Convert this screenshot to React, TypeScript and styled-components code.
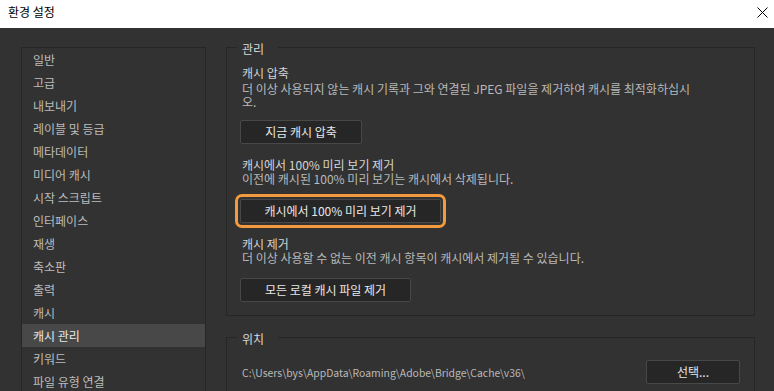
import React from 'react';
import styled, { createGlobalStyle } from 'styled-components';

const GlobalStyle = createGlobalStyle`
  html, body {
    margin: 0;
    padding: 0;
    background: #323232;
  }
  body {
    font-family: "Noto Sans CJK KR", "Noto Sans", sans-serif;
    overflow: hidden;
  }
`;

const Window = styled.div`
  width: 774px;
  height: 391px;
  display: flex;
  flex-direction: column;
  overflow: hidden;
  background: #323232;
`;

const TitleBar = styled.div`
  height: 28px;
  flex: 0 0 28px;
  background: #ffffff;
  display: flex;
  align-items: center;
  justify-content: space-between;
  padding: 0 6px 4px 8px;
  box-sizing: border-box;
`;

const TitleText = styled.span`
  font-size: 12px;
  line-height: 14px;
  color: #000000;
`;

const CloseButton = styled.button`
  border: none;
  background: none;
  padding: 0;
  width: 11px;
  height: 11px;
  display: flex;
`;

const Body = styled.div`
  flex: 1;
  display: flex;
  gap: 20px;
  padding: 10px 19px 0 21px;
  min-height: 0;
`;

const Sidebar = styled.ul`
  list-style: none;
  margin: 9px 0 0 0;
  padding: 0;
  width: 185px;
  flex: 0 0 185px;
  box-sizing: border-box;
  border: 1px solid #262626;
  border-bottom: none;
`;

const NavItem = styled.li<{ $active?: boolean }>`
  height: 23px;
  line-height: 24px;
  padding-left: 11px;
  font-size: 12px;
  color: ${p => (p.$active ? '#e8e8e8' : '#bcbcbc')};
  background: ${p => (p.$active ? '#484848' : 'transparent')};
  white-space: nowrap;
`;

const Content = styled.div`
  flex: 1;
  display: flex;
  flex-direction: column;
  gap: 12px;
  min-width: 0;
`;

const Group = styled.fieldset<{ $padTop: number; $padBottom: number }>`
  margin: 0;
  min-width: 0;
  border: 1px solid #262626;
  padding: ${p => p.$padTop}px 14px ${p => p.$padBottom}px 15px;
`;

const GroupLegend = styled.legend`
  font-size: 12px;
  line-height: 14px;
  color: #d8d8d8;
  padding: 4px 14px 0 5px;
  margin-left: -5px;
`;

const Section = styled.div<{ $gap?: number }>`
  display: flex;
  flex-direction: column;
  align-items: flex-start;
  margin-top: ${p => p.$gap ?? 0}px;
`;

const SectionTitle = styled.div`
  font-size: 12px;
  line-height: 14px;
  color: #d4d4d4;
`;

const SectionDesc = styled.div<{ $offset?: number }>`
  font-size: 12px;
  line-height: 13px;
  color: #b9b9b9;
  max-width: 452px;
  margin-top: ${p => p.$offset ?? 0}px;
`;

const Button = styled.button<{ $width: number; $top?: number; $focused?: boolean }>`
  width: ${p => p.$width}px;
  height: 24px;
  margin: ${p => p.$top ?? 0}px 0 0 -2px;
  padding: 0;
  background: #262626;
  border: 1px solid #484848;
  border-radius: 2px;
  color: #e6e6e6;
  font-family: inherit;
  font-size: 12px;
  line-height: 22px;
  outline: ${p => (p.$focused ? '3px solid #f39a3e' : 'none')};
  outline-offset: 2px;
`;

const PathRow = styled.div`
  display: flex;
  align-items: center;
  justify-content: space-between;
`;

const PathText = styled.span`
  font-size: 10.4px;
  color: #b9b9b9;
  white-space: nowrap;
`;

const navItems = [
  '일반',
  '고급',
  '내보내기',
  '레이블 및 등급',
  '메타데이터',
  '미디어 캐시',
  '시작 스크립트',
  '인터페이스',
  '재생',
  '축소판',
  '출력',
  '캐시',
  '캐시 관리',
  '키워드',
  '파일 유형 연결',
];

const App: React.FC = () => {
  return (
    <Window>
      <GlobalStyle />
      <TitleBar>
        <TitleText>환경 설정</TitleText>
        <CloseButton aria-label="닫기">
          <svg width="11" height="11" viewBox="0 0 11 11">
            <path d="M0.5 0.5 L10.5 10.5 M10.5 0.5 L0.5 10.5" stroke="#000" strokeWidth="1" fill="none" />
          </svg>
        </CloseButton>
      </TitleBar>

      <Body>
        <Sidebar>
          {navItems.map(item => (
            <NavItem key={item} $active={item === '캐시 관리'}>
              {item}
            </NavItem>
          ))}
        </Sidebar>

        <Content>
          <Group $padTop={10} $padBottom={13}>
            <GroupLegend>관리</GroupLegend>

            <Section>
              <SectionTitle>캐시 압축</SectionTitle>
              <SectionDesc $offset={2}>
                더 이상 사용되지 않는 캐시 기록과 그와 연결된 JPEG 파일을 제거하여 캐시를 최적화하십시오.
              </SectionDesc>
              <Button $width={122} $top={12}>
                지금 캐시 압축
              </Button>
            </Section>

            <Section $gap={14}>
              <SectionTitle>캐시에서 100% 미리 보기 제거</SectionTitle>
              <SectionDesc>이전에 캐시된 100% 미리 보기는 캐시에서 삭제됩니다.</SectionDesc>
              <Button $width={201} $top={14} $focused>
                캐시에서 100% 미리 보기 제거
              </Button>
            </Section>

            <Section $gap={14}>
              <SectionTitle>캐시 제거</SectionTitle>
              <SectionDesc>더 이상 사용할 수 없는 이전 캐시 항목이 캐시에서 제거될 수 있습니다.</SectionDesc>
              <Button $width={171} $top={14}>
                모든 로컬 캐시 파일 제거
              </Button>
            </Section>
          </Group>

          <Group $padTop={14} $padBottom={16}>
            <GroupLegend>위치</GroupLegend>
            <PathRow>
              <PathText>C:\Users\bys\AppData\Roaming\Adobe\Bridge\Cache\v36\</PathText>
              <Button $width={94}>선택...</Button>
            </PathRow>
          </Group>
        </Content>
      </Body>
    </Window>
  );
};

export default App;
